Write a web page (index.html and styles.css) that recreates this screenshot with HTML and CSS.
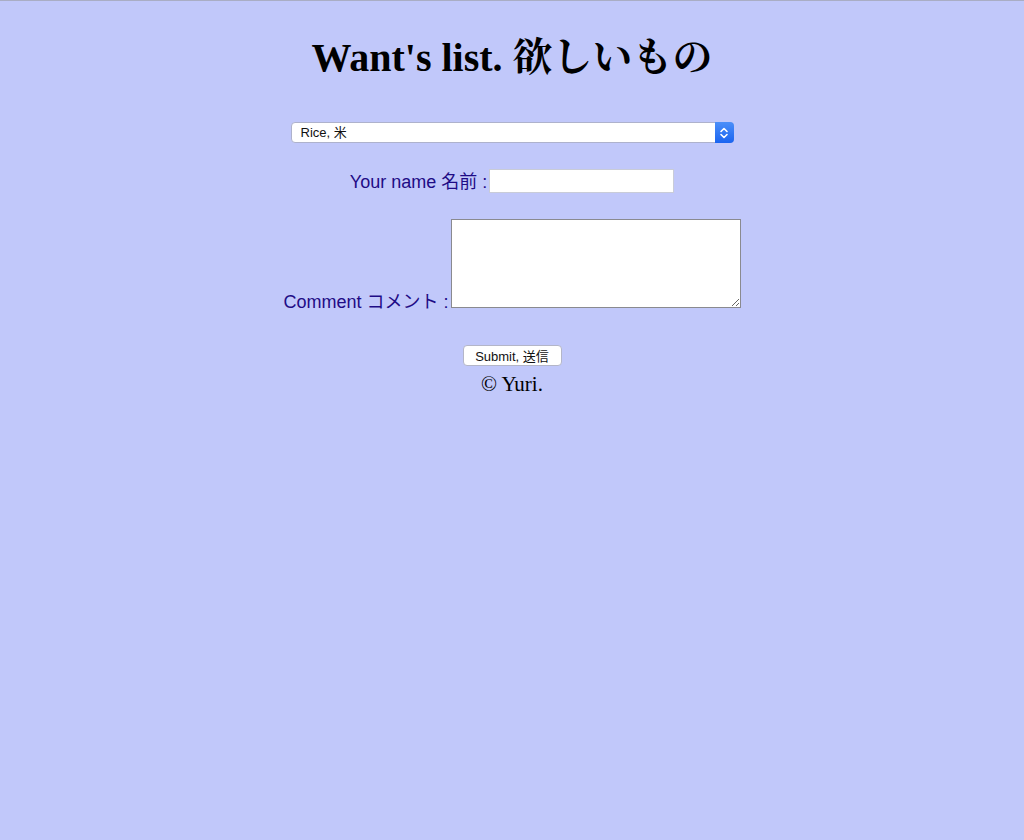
FILE: index.html
```html
<!DOCTYPE html>
<html lang="ja">
<head>
<meta charset="utf-8">
<title>Want's list</title>
<link rel="stylesheet" href="styles.css">
</head>
<body>
<div class="page">
  <h1 class="title">Want's list. 欲しいもの</h1>
  <form class="form">
    <div class="select-wrap">
      <select class="select">
        <option>Rice, 米</option>
      </select>
      <span class="select-arrow">
        <svg width="10" height="14" viewBox="0 0 10 14" fill="none" stroke="#fff" stroke-width="1.6" stroke-linecap="round" stroke-linejoin="round"><path d="M2 5.5 L5 2.5 L8 5.5"/><path d="M2 8.5 L5 11.5 L8 8.5"/></svg>
      </span>
    </div>
    <div class="row row-name">
      <label class="label" for="name">Your name 名前 :</label>
      <input class="input" id="name" type="text">
    </div>
    <div class="row row-comment">
      <label class="label" for="comment">Comment コメント :</label>
      <textarea class="textarea" id="comment"></textarea>
    </div>
    <button class="submit" type="button">Submit, 送信</button>
  </form>
  <p class="copy">© Yuri.</p>
</div>
</body>
</html>
```

FILE: styles.css
```css
html, body {
  margin: 0;
  padding: 0;
  height: 100%;
}
body {
  background: #c1c8fa;
  border-top: 1px solid #a9adc4;
  box-sizing: border-box;
  font-family: "Liberation Serif", "Noto Sans CJK JP", serif;
}
.page {
  display: flex;
  flex-direction: column;
  align-items: center;
}
.title {
  margin: 34px 0 0;
  font-size: 40px;
  line-height: 46px;
  font-weight: bold;
  color: #000;
  font-family: "Liberation Serif", "Noto Serif CJK JP", "Noto Sans CJK JP", serif;
}
.form {
  display: flex;
  flex-direction: column;
  align-items: center;
  margin-top: 41px;
}
.select-wrap {
  position: relative;
  width: 443px;
  height: 21px;
}
.select {
  appearance: none;
  -webkit-appearance: none;
  width: 100%;
  height: 21px;
  margin: 0;
  padding: 0 0 0 9px;
  border: 1px solid #aeb2cc;
  border-radius: 4px;
  background: #fff;
  font-family: "Liberation Sans", "Noto Sans CJK JP", sans-serif;
  font-size: 13px;
  color: #111;
  box-sizing: border-box;
}
.select-arrow {
  position: absolute;
  right: 0;
  top: 0;
  width: 19px;
  height: 21px;
  background: linear-gradient(#4b8ff9, #1a64f0);
  border-radius: 0 4px 4px 0;
  display: flex;
  align-items: center;
  justify-content: center;
  pointer-events: none;
}
.row {
  display: flex;
  align-items: flex-end;
  justify-content: center;
  margin-top: 26px;
}
.row-name {
  align-items: center;
  margin-top: 26px;
}
.label {
  font-family: "Liberation Sans", "Noto Sans CJK JP", sans-serif;
  font-size: 18px;
  color: #1f0c86;
  margin-right: 2px;
}
.row-name .label {
  margin-top: -2px;
}
.row-comment .label {
  line-height: 18px;
  margin-bottom: -3px;
}
.input {
  width: 185px;
  height: 24px;
  margin: 0;
  padding: 1px 3px;
  border: 1px solid #c9ccd8;
  background: #fff;
  box-sizing: border-box;
}
.textarea {
  width: 290px;
  height: 89px;
  margin: 0;
  padding: 2px;
  border: 1px solid #8a8a8f;
  background: #fff;
  box-sizing: border-box;
  resize: both;
}
.submit {
  margin-top: 37px;
  width: 99px;
  height: 21px;
  padding: 0;
  border: 1px solid #b4b6c8;
  border-radius: 4px;
  background: #fff;
  font-family: "Liberation Sans", "Noto Sans CJK JP", sans-serif;
  font-size: 13px;
  color: #111;
  box-sizing: border-box;
}
.copy {
  margin: 6px 0 0;
  font-size: 21px;
  line-height: 24px;
  color: #000;
}
```
